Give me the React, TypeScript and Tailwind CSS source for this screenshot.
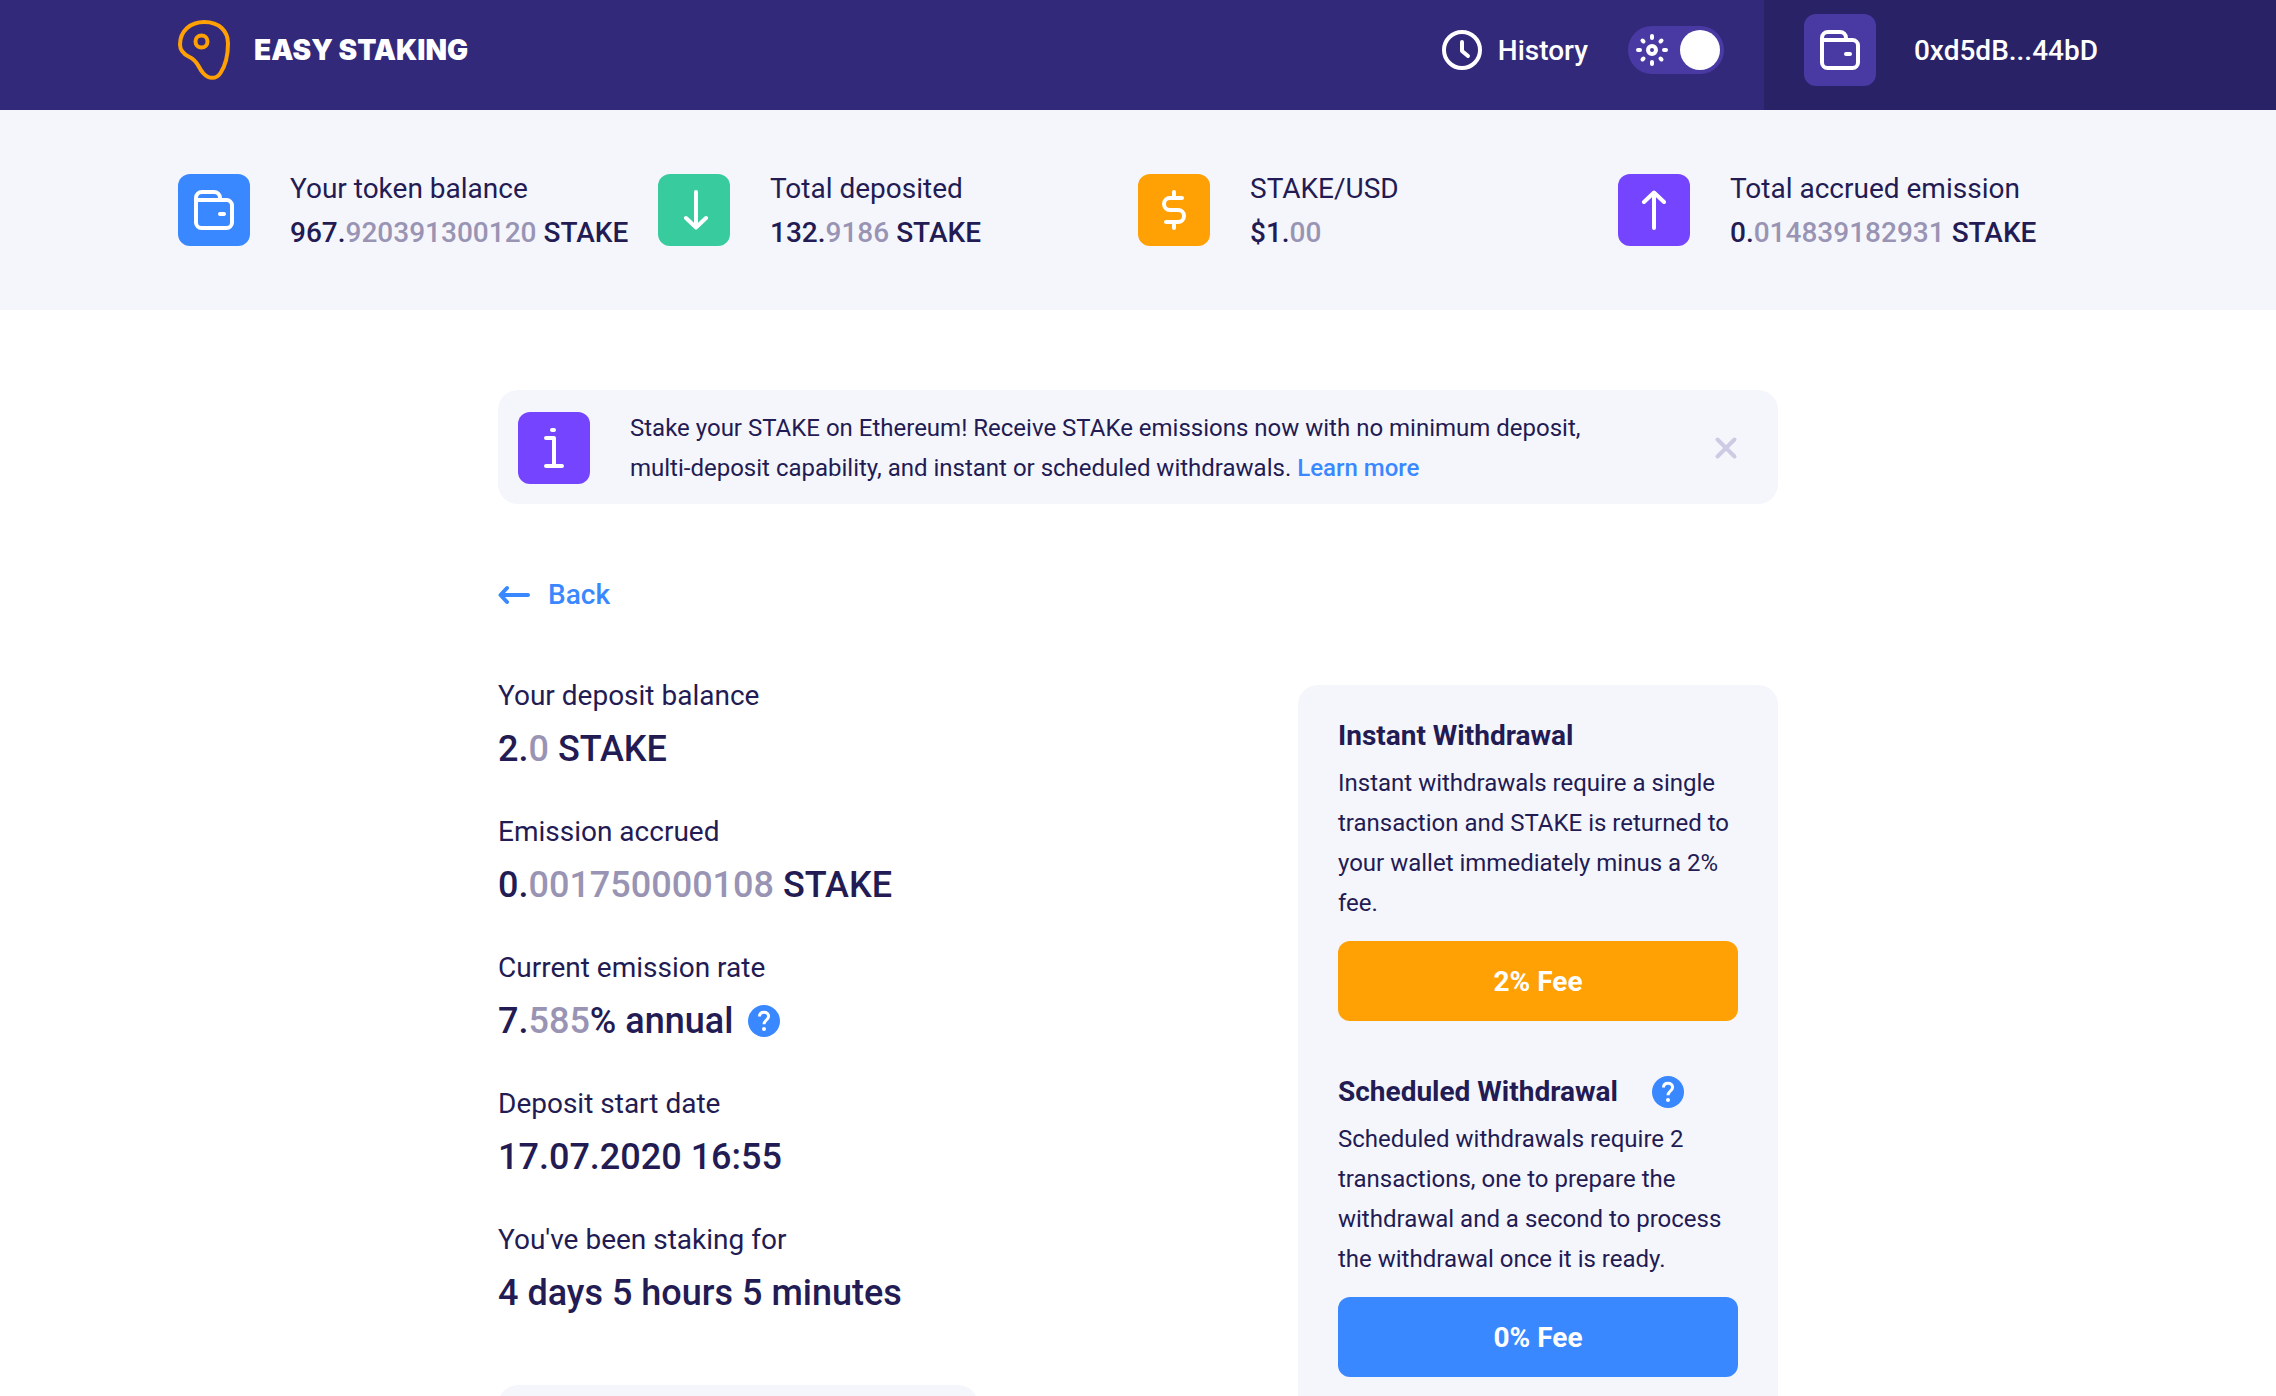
import React, { useState } from "react";

function Logo() {
  return (
    <svg viewBox="0 0 52 60" className="h-[60px] w-[52px] shrink-0" fill="none" stroke="#ffa004" strokeWidth="4" aria-hidden="true">
      <path d="M26.500 2C12 2 2 11 2 24.500C2 31 5.500 34 11 36.800C21 41.500 19 46.500 25.500 53.500C30.500 59 38 59.800 42.500 53C47.500 45.500 50 34.500 50 23.500C50 11 41 2 26.500 2Z" />
      <circle cx="23.500" cy="21.500" r="6" />
    </svg>
  );
}

function WalletIcon() {
  return (
    <svg viewBox="0 0 40 40" className="size-10" fill="none" stroke="#fff" strokeWidth="4" strokeLinecap="round" strokeLinejoin="round" aria-hidden="true">
      <path d="M2 10V32.500A5.500 5.500 0 0 0 7.500 38H32.500A5.500 5.500 0 0 0 38 32.500V15.500A5.500 5.500 0 0 0 32.500 10H2V8A6 6 0 0 1 8 2H20A6 6 0 0 1 26 8V9.500" />
      <path d="M26 24H30" />
    </svg>
  );
}

function StrokeIcon({ d }: { d: string }) {
  return (
    <svg viewBox="0 0 40 40" className="size-10" fill="none" stroke="#fff" strokeWidth="4" strokeLinecap="round" strokeLinejoin="round" aria-hidden="true">
      <path d={d} />
    </svg>
  );
}

const ARROW_DOWN = "M22 2V37M12 28L22 37.500L32 28";
const ARROW_UP = "M20 38V3M10 12L20 2.500L30 12";
const DOLLAR = "M20 2V7M20 33V38M28 8H16A6 6 0 0 0 10 14A6 6 0 0 0 16 20H24A6 6 0 0 1 30 26A6 6 0 0 1 24 32H12";
const INFO = "M12 10H20V38M12 38H28M18 2H20";

function ClockIcon() {
  return (
    <svg viewBox="0 0 40 40" className="size-10" fill="none" stroke="#fff" strokeWidth="4" strokeLinecap="round" strokeLinejoin="round" aria-hidden="true">
      <circle cx="20" cy="20" r="18" />
      <path d="M20 12V21L26 26" />
    </svg>
  );
}

function SunIcon() {
  return (
    <svg viewBox="0 0 32 32" className="size-8" fill="none" stroke="#fff" strokeWidth="4" strokeLinecap="round" aria-hidden="true">
      <circle cx="16" cy="16" r="4" />
      <path d="M16 2V4M16 28V30M2 16H4M28 16H30M6.500 6.500L7.500 7.500M24.500 24.500L25.500 25.500M6.500 25.500L7.500 24.500M24.500 7.500L25.500 6.500" />
    </svg>
  );
}

function Tile({ className = "", children }: { className?: string; children: React.ReactNode }) {
  return <div className={`flex size-[72px] shrink-0 items-center justify-center rounded-xl ${className}`}>{children}</div>;
}

function Amount({ whole, decimals, suffix }: { whole: string; decimals?: string; suffix?: string }) {
  return (
    <>
      {whole}
      {decimals && <span className="text-[#9994b3]">{decimals}</span>}
      {suffix}
    </>
  );
}

function Help({ label }: { label: string }) {
  return (
    <button type="button" aria-label={label} className="size-8 shrink-0">
      <svg viewBox="0 0 32 32" className="size-8" fill="none" aria-hidden="true">
        <circle cx="16" cy="16" r="16" fill="#3a88ff" />
        <path d="M11.500 11.500C11.500 8.800 13.300 7.300 16 7.300C18.700 7.300 20.600 8.900 20.600 11.300C20.600 14.800 16 15.300 16 19.200" stroke="#fff" strokeWidth="3" />
        <circle cx="16" cy="24" r="2" fill="#fff" />
      </svg>
    </button>
  );
}

const stats = [
  { label: "Your token balance", whole: "967.", decimals: "920391300120", suffix: " STAKE", tile: "bg-[#3a88ff]", icon: <WalletIcon /> },
  { label: "Total deposited", whole: "132.", decimals: "9186", suffix: " STAKE", tile: "bg-[#37cb9e]", icon: <StrokeIcon d={ARROW_DOWN} /> },
  { label: "STAKE/USD", whole: "$1.", decimals: "00", suffix: "", tile: "bg-[#ffa004]", icon: <StrokeIcon d={DOLLAR} /> },
  { label: "Total accrued emission", whole: "0.", decimals: "014839182931", suffix: " STAKE", tile: "bg-[#7544ff]", icon: <StrokeIcon d={ARROW_UP} /> },
];

const details = [
  { label: "Your deposit balance", whole: "2.", decimals: "0", suffix: " STAKE" },
  { label: "Emission accrued", whole: "0.", decimals: "001750000108", suffix: " STAKE" },
  { label: "Current emission rate", whole: "7.", decimals: "585", suffix: "% annual", help: true },
  { label: "Deposit start date", whole: "17.07.2020 16:55" },
  { label: "You've been staking for", whole: "4 days 5 hours 5 minutes" },
];

const withdrawals = [
  {
    title: "Instant Withdrawal",
    text: "Instant withdrawals require a single transaction and STAKE is returned to your wallet immediately minus a 2% fee.",
    action: "2% Fee",
    button: "bg-[#ffa004]",
  },
  {
    title: "Scheduled Withdrawal",
    text: "Scheduled withdrawals require 2 transactions, one to prepare the withdrawal and a second to process the withdrawal once it is ready.",
    action: "0% Fee",
    button: "bg-[#3a88ff]",
    help: true,
  },
];

export default function App() {
  const [light, setLight] = useState(true);
  const [notice, setNotice] = useState(true);

  return (
    <div className="min-h-screen bg-white font-['Roboto',sans-serif] text-[28px] text-[#231b53]">
      <header className="flex bg-[#33297a] font-medium text-white">
        <div className="flex flex-1 items-center justify-between pt-3.5 pr-10 pb-6 pl-[max(24px,calc(50vw-960px))]">
          <a href="#" className="flex items-center gap-6">
            <Logo />
            <span className="font-['Inter',sans-serif] leading-8 font-black">EASY STAKING</span>
          </a>
          <div className="flex items-center gap-10">
            <a href="#history" className="flex items-center gap-4">
              <ClockIcon />
              <span className="pt-0.5">History</span>
            </a>
            <label className="flex h-12 w-24 cursor-pointer items-center justify-between rounded-full bg-[#493aa3] pr-1 pl-2">
              <input type="checkbox" aria-label="Light theme" checked={light} onChange={() => setLight(!light)} className="sr-only" />
              <SunIcon />
              <span className="size-10 rounded-full bg-white" />
            </label>
          </div>
        </div>
        <div className="flex items-center justify-between gap-[38px] bg-[#2a2267] pt-3.5 pr-[max(24px,calc(50vw-960px))] pb-6 pl-10">
          <button type="button" aria-label="Wallet">
            <Tile className="bg-[#493aa3]">
              <WalletIcon />
            </Tile>
          </button>
          <span className="pt-0.5">0xd5dB...44bD</span>
        </div>
      </header>

      <section className="bg-[#f5f6fc] px-6 py-[55px]">
        <div className="mx-auto grid max-w-[1920px] grid-cols-4">
          {stats.map((s) => (
            <div key={s.label} className="flex items-center gap-10">
              <Tile className={s.tile}>{s.icon}</Tile>
              <div className="pt-0.5 leading-[44px] whitespace-nowrap">
                <div>{s.label}</div>
                <div className="font-medium">
                  <Amount whole={s.whole} decimals={s.decimals} suffix={s.suffix} />
                </div>
              </div>
            </div>
          ))}
        </div>
      </section>

      <main className="mx-auto max-w-[1280px] pt-20">
        {notice && (
          <div className="flex items-center rounded-[20px] bg-[#f5f6fc] pt-[18px] pr-10 pb-4 pl-5">
            <Tile className="bg-[#7544ff]">
              <StrokeIcon d={INFO} />
            </Tile>
            <p className="ml-10 max-w-[1000px] text-2xl leading-10">
              Stake your STAKE on Ethereum! Receive STAKe emissions now with no minimum deposit, multi-deposit capability, and instant
              or scheduled withdrawals.{" "}
              <a href="#learn-more" className="font-medium text-[#3a88ff]">
                Learn more
              </a>
            </p>
            <button type="button" aria-label="Close" onClick={() => setNotice(false)} className="ml-auto">
              <svg viewBox="0 0 24 24" className="size-6" stroke="#cdcae4" strokeWidth="4" strokeLinecap="round" aria-hidden="true">
                <path d="M3.500 3.500L20.500 20.500M20.500 3.500L3.500 20.500" />
              </svg>
            </button>
          </div>
        )}

        <a href="#back" className="mt-[71px] flex w-fit items-center gap-[18px] leading-10 font-medium text-[#3a88ff]">
          <svg viewBox="0 0 32 20" className="h-5 w-8" fill="none" stroke="currentColor" strokeWidth="4" strokeLinecap="round" strokeLinejoin="round" aria-hidden="true">
            <path d="M30 10H3M9 3L2.500 10L9 17" />
          </svg>
          Back
        </a>

        <div className="mt-[61px] flex items-start justify-between">
          <div className="w-[480px]">
            <dl className="flex flex-col gap-[30px]">
              {details.map((d) => (
                <div key={d.label}>
                  <dt className="leading-10">{d.label}</dt>
                  <dd className="flex items-center gap-[15px] text-4xl leading-[66px] font-medium">
                    <span>
                      <Amount whole={d.whole} decimals={d.decimals} suffix={d.suffix} />
                    </span>
                    {d.help && <Help label="About the emission rate" />}
                  </dd>
                </div>
              ))}
            </dl>
            <div className="mt-[59px] h-40 rounded-[20px] bg-[#f5f6fc]" />
          </div>

          <aside className="mt-[9px] flex w-[480px] flex-col gap-[51px] rounded-[20px] bg-[#f5f6fc] px-10 pt-[31px] pb-10">
            {withdrawals.map((w) => (
              <section key={w.title}>
                <div className="flex items-center gap-[34px]">
                  <h2 className="leading-10 font-bold">{w.title}</h2>
                  {w.help && <Help label="About scheduled withdrawals" />}
                </div>
                <p className="mt-[7px] text-2xl leading-10">{w.text}</p>
                <button type="button" className={`mt-[18px] h-20 w-full rounded-xl pt-0.5 font-bold text-white ${w.button}`}>
                  {w.action}
                </button>
              </section>
            ))}
          </aside>
        </div>
      </main>
    </div>
  );
}
